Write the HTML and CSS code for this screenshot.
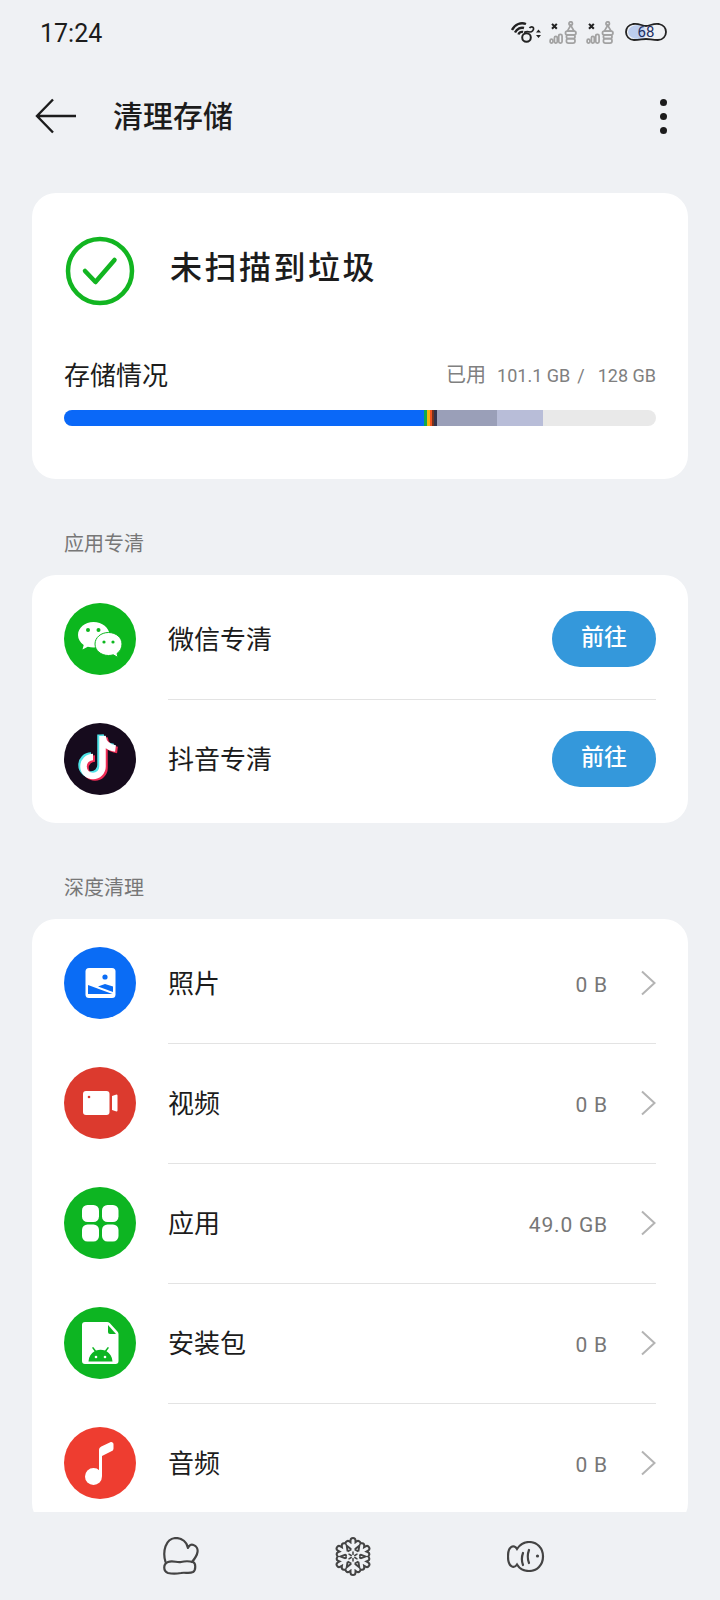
FILE: index.html

```html
<!DOCTYPE html>
<html lang="zh-CN">
<head>
  <meta charset="UTF-8" />
  <meta name="viewport" content="width=device-width, initial-scale=1.0" />
  <title>清理存储</title>
  <link rel="stylesheet" href="styles.css">
</head>
<body>
  <svg class="defs" width="0" height="0">
    <symbol id="sim" viewBox="0 0 31 24">
      <path d="M3 3l5 5M8 3l-5 5" stroke="#222" stroke-width="2.2" fill="none"/>
      <g fill="none" stroke="#a2a2a2" stroke-width="1.8">
        <rect x="1" y="19" width="3" height="4" rx="1.5"/>
        <rect x="5.5" y="16" width="3" height="7" rx="1.5"/>
        <rect x="10" y="14" width="3.5" height="9" rx="1.7"/>
        <circle cx="22.5" cy="2.6" r="1.8"/>
        <path d="M19 10.5l3.5-6 3.5 6z"/>
        <rect x="17" y="10.5" width="11" height="4" rx="2"/>
        <rect x="18" y="14.5" width="9" height="4" rx="2"/>
        <rect x="18" y="18.5" width="9" height="4.5" rx="2.2"/>
      </g>
    </symbol>
    <symbol id="arrow" viewBox="0 0 16 26">
      <path d="M2 1.5L14.5 13 2 24.5" fill="none" stroke="#b4b4b4" stroke-width="2"/>
    </symbol>
  </svg>

  <div class="page">
    <div class="status">
      <span class="time">17:24</span>
      <div class="status-icons">
        <svg class="wifi" width="31" height="21" viewBox="0 0 31 21">
          <g fill="none" stroke="#222" stroke-width="2.4">
            <path d="M1 8C4 2 10 0 15 2"/>
            <path d="M4 10.5C6 6.5 10 5 13 6"/>
            <path d="M7.5 12.5C8 10.5 10 9.5 12 10"/>
            <circle cx="15.5" cy="15.5" r="4.3" stroke-width="2"/>
            <path d="M13 10.5c2-1 4-1 6-.5 2 0 4-2 3.500-4-.5-1.500-3-1.500-4 0" stroke-width="1.7"/>
          </g>
          <path d="M25 10.5l2.500-3 2.500 3zM25 13l2.500 3 2.500-3z" fill="#222"/>
        </svg>
        <svg class="sim" width="30" height="23"><use href="#sim"/></svg>
        <svg class="sim" width="30" height="23"><use href="#sim"/></svg>
        <div class="battery">
          <svg width="42" height="20" viewBox="0 0 42 20">
            <defs>
              <linearGradient id="batt-fill">
                <stop offset="0" stop-color="#bccdee"/>
                <stop offset="0.7" stop-color="#bccdee"/>
                <stop offset="1" stop-color="#bccdee" stop-opacity="0"/>
              </linearGradient>
            </defs>
            <ellipse cx="13" cy="10" rx="10" ry="7" fill="url(#batt-fill)"/>
            <path d="M8 2c6-1 9 2 13 2s7-3 13-2c4 1 7 4 7 8s-3 8-8 8c-6 0-8-1-12-1s-6 1-12 1c-5 0-8-4-8-8s3-7 7-8z" fill="none" stroke="#222" stroke-width="1.8"/>
          </svg>
          <span class="battery-num">68</span>
        </div>
      </div>
    </div>

    <div class="nav">
      <svg class="nav-back" width="42" height="36" viewBox="0 0 42 36">
        <path d="M18 1.5L2 18l16 16.5M2 18h39" fill="none" stroke="#1c1c1c" stroke-width="2.4"/>
      </svg>
      <h1>清理存储</h1>
      <div class="nav-more"><i></i><i></i><i></i></div>
    </div>

    <div class="main">
      <div class="card summary">
        <div class="summary-top">
          <svg width="70" height="70" viewBox="0 0 70 70">
            <circle cx="35" cy="35" r="32" fill="none" stroke="#12b521" stroke-width="4.5"/>
            <path d="M20 35l10.5 11L49.500 24" fill="none" stroke="#12b521" stroke-width="4.5" stroke-linecap="round" stroke-linejoin="round"/>
          </svg>
          <span class="summary-title">未扫描到垃圾</span>
        </div>
        <div class="usage">
          <span class="usage-name">存储情况</span>
          <span class="usage-num"><span class="usage-cn">已用</span>101.1 GB<span class="usage-sep">/</span>128 GB</span>
        </div>
        <div class="bar">
          <span class="seg seg-blue"></span>
          <span class="seg seg-a"></span>
          <span class="seg seg-b"></span>
          <span class="seg seg-c"></span>
          <span class="seg seg-d"></span>
          <span class="seg seg-e"></span>
          <span class="seg seg-gray"></span>
          <span class="seg seg-light"></span>
        </div>
      </div>

      <div class="label">应用专清</div>
      <div class="card list">
        <div class="row">
          <svg class="icon" viewBox="0 0 72 72">
            <circle cx="36" cy="36" r="36" fill="#0cb71e"/>
            <path d="M29.5 19C20.900 19 14 24.700 14 32c0 4 2.200 7.500 5.700 10l-1.200 4.500 5.300-2.700c1.800.5 3.700.8 5.700.8 8.600 0 16-5.400 16-12.600S38.100 19 29.500 19z" fill="#fff"/>
            <path d="M44.5 29.5C36.900 29.500 31 34.600 31 41s5.900 11.500 13.500 11.500c1.700 0 3.300-.3 4.800-.7l4.700 2.700-1-4c3.100-2.200 5-5.600 5-9.500 0-6.400-5.900-11.500-13.500-11.500z" fill="#fff" stroke="#0cb71e" stroke-width="1"/>
            <circle cx="24" cy="27" r="2" fill="#0cb71e"/>
            <circle cx="34.5" cy="27" r="2" fill="#0cb71e"/>
            <circle cx="40" cy="39" r="1.6" fill="#0cb71e"/>
            <circle cx="49" cy="39" r="1.6" fill="#0cb71e"/>
          </svg>
          <div class="row-body">
            <span class="row-name">微信专清</span>
            <span class="go">前往</span>
          </div>
        </div>
        <div class="row">
          <svg class="icon" viewBox="0 0 72 72">
            <circle cx="36" cy="36" r="36" fill="#160b1d"/>
            <g fill="none" stroke-width="6.5">
              <path transform="translate(-2 -1.5)" d="M38.5 13v30.500a9.500 9.500 0 1 1-9.500-9.500M38.500 13c.8 7 5.500 11.500 13 12.500" stroke="#4fe3e6"/>
              <path transform="translate(2 1.5)" d="M38.5 13v30.500a9.500 9.500 0 1 1-9.500-9.500M38.500 13c.8 7 5.500 11.500 13 12.500" stroke="#ef2c55"/>
              <path d="M38.5 13v30.500a9.500 9.500 0 1 1-9.500-9.500M38.500 13c.8 7 5.500 11.500 13 12.500" stroke="#fff"/>
            </g>
          </svg>
          <div class="row-body">
            <span class="row-name">抖音专清</span>
            <span class="go">前往</span>
          </div>
        </div>
      </div>

      <div class="label">深度清理</div>
      <div class="card list">
        <div class="row">
          <svg class="icon" viewBox="0 0 72 72">
            <circle cx="36" cy="36" r="36" fill="#0a6cf5"/>
            <rect x="21.5" y="21" width="30" height="30" rx="3.5" fill="#fff"/>
            <circle cx="41" cy="30" r="2.6" fill="#0a6cf5"/>
            <path d="M24 38l24.500 9H24z" fill="#0a6cf5"/>
            <path d="M34 39.5l7-2.500 8 2.500V45z" fill="#0a6cf5"/>
          </svg>
          <div class="row-body">
            <span class="row-name">照片</span>
            <span class="row-val">0 B</span>
            <svg class="chev" width="16" height="26"><use href="#arrow"/></svg>
          </div>
        </div>
        <div class="row">
          <svg class="icon" viewBox="0 0 72 72">
            <circle cx="36" cy="36" r="36" fill="#dc3a2e"/>
            <rect x="19" y="24" width="26.5" height="24" rx="3" fill="#fff"/>
            <path d="M48 29l4.500-1.500a1 1 0 0 1 1 1v15a1 1 0 0 1-1 1L48 43z" fill="#fff"/>
            <circle cx="25" cy="30" r="1.3" fill="#dc3a2e"/>
          </svg>
          <div class="row-body">
            <span class="row-name">视频</span>
            <span class="row-val">0 B</span>
            <svg class="chev" width="16" height="26"><use href="#arrow"/></svg>
          </div>
        </div>
        <div class="row">
          <svg class="icon" viewBox="0 0 72 72">
            <circle cx="36" cy="36" r="36" fill="#0db522"/>
            <rect x="18" y="18" width="17" height="17" rx="5.5" fill="#fff"/>
            <rect x="38" y="18" width="16.5" height="17" rx="5.5" fill="#fff"/>
            <rect x="18" y="37.5" width="17" height="17" rx="5.5" fill="#fff"/>
            <rect x="38" y="37.5" width="16.5" height="17" rx="5.5" fill="#fff"/>
          </svg>
          <div class="row-body">
            <span class="row-name">应用</span>
            <span class="row-val">49.0 GB</span>
            <svg class="chev" width="16" height="26"><use href="#arrow"/></svg>
          </div>
        </div>
        <div class="row">
          <svg class="icon" viewBox="0 0 72 72">
            <circle cx="36" cy="36" r="36" fill="#0db522"/>
            <path d="M21 15h22c1 0 2 .4 2.700 1.100l7.700 8.300c.7.700 1.100 1.700 1.100 2.700V54a3 3 0 0 1-3 3H21a3 3 0 0 1-3-3V18a3 3 0 0 1 3-3z" fill="#fff"/>
            <path d="M44 18l8 9h-6a2 2 0 0 1-2-2z" fill="#0db522"/>
            <path d="M24.5 54.5c.3-5 2.700-8.400 6-10.300L28 40.700l1.200-.8 2.800 3.600c3-1.100 6-1.100 9 0l2.800-3.600 1.200.8-2.500 3.500c3.300 1.900 5.700 5.300 6 10.300z" fill="#0db522"/>
            <circle cx="32" cy="50" r="1.3" fill="#fff"/>
            <circle cx="41" cy="50" r="1.3" fill="#fff"/>
          </svg>
          <div class="row-body">
            <span class="row-name">安装包</span>
            <span class="row-val">0 B</span>
            <svg class="chev" width="16" height="26"><use href="#arrow"/></svg>
          </div>
        </div>
        <div class="row">
          <svg class="icon" viewBox="0 0 72 72">
            <circle cx="36" cy="36" r="36" fill="#ee3d30"/>
            <circle cx="29.5" cy="49.5" r="8.5" fill="#fff"/>
            <path d="M35 49V23c0-1.500.8-2.800 2.300-3.500l9-4.300c1.500-.7 3.200.4 3.200 2v4.300c0 1.100-.6 2.100-1.600 2.600L38 29v20z" fill="#fff"/>
          </svg>
          <div class="row-body">
            <span class="row-name">音频</span>
            <span class="row-val">0 B</span>
            <svg class="chev" width="16" height="26"><use href="#arrow"/></svg>
          </div>
        </div>
      </div>
    </div>

    <div class="tabs">
      <svg width="36" height="38" viewBox="0 0 36 38">
        <g fill="none" stroke="#444" stroke-width="2.2" stroke-linejoin="round" stroke-linecap="round">
          <path d="M2.5 25C-.5 15 2 1.500 13 1c6 0 11 4 12 10 1-3 3.500-4 5.500-3 3 1 4.500 4 4 7-.5 4-3 7-5.500 10"/>
          <path d="M5 25c5-2 9 1 13 0s8-1 12 0c3 1 3 8 0 10-4 2-8 0-12 1-5 1-9 1-13 0-5-2-5-9 0-11z"/>
        </g>
      </svg>
      <svg width="36" height="39" viewBox="-18 -19.5 36 39">
        <defs>
          <g id="flake-arm">
            <path d="M0 -4V-16M0 -9L-5 -13M0 -9L5 -13"/>
          </g>
          <g id="flake">
            <use href="#flake-arm"/>
            <use href="#flake-arm" transform="rotate(60)"/>
            <use href="#flake-arm" transform="rotate(120)"/>
            <use href="#flake-arm" transform="rotate(180)"/>
            <use href="#flake-arm" transform="rotate(240)"/>
            <use href="#flake-arm" transform="rotate(300)"/>
          </g>
        </defs>
        <use href="#flake" fill="none" stroke="#444" stroke-width="7" stroke-linecap="round" stroke-linejoin="round"/>
        <circle r="7.5" fill="#444"/>
        <use href="#flake" fill="none" stroke="#eff1f4" stroke-width="3" stroke-linecap="round" stroke-linejoin="round"/>
        <circle r="6.2" fill="#eff1f4"/>
        <g stroke="#444" stroke-width="1.5" stroke-linecap="round">
          <path d="M0-2v-2.500M0 2v2.500M-1.800-1l-2.200-1.300M1.800-1l2.200-1.300M-1.800 1l-2.200 1.300M1.800 1l2.200 1.300"/>
        </g>
      </svg>
      <svg width="38" height="31" viewBox="0 0 38 31">
        <g fill="none" stroke="#444" stroke-width="2.2" stroke-linecap="round">
          <path d="M10 8C7 3 1 5 1 15.500 1 26 7 28 10 23.500c3 5 8 6.500 12 6.500 8 0 14-6 14-14.500S30 1 22 1C17 1 13 3.500 10 8z"/>
          <path d="M16 12c-1.500 4-1.500 8 0 12M22 9c-1.500 4-1.500 9 0 13"/>
        </g>
        <circle cx="30.5" cy="15" r="1.6" fill="#444"/>
      </svg>
    </div>
  </div>
</body>
</html>
```

FILE: styles.css

```css
body {
  margin: 0;
  background-color: #eff1f4;
  color: #1c1c1c;
  font-family: Roboto, "Noto Sans CJK SC", sans-serif;
}
.defs {
  position: absolute;
}
.page {
  height: 1600px;
  display: flex;
  flex-direction: column;
  overflow: hidden;
}

.status {
  height: 66px;
  flex: none;
  display: flex;
  align-items: center;
  justify-content: space-between;
  padding: 0 53px 0 40px;
}
.time {
  font-size: 25px;
}
.status-icons {
  display: flex;
  align-items: center;
  gap: 8px;
  margin-bottom: 2px;
}
.sim {
  margin-left: -1px;
}
.battery {
  position: relative;
  width: 42px;
  height: 20px;
  margin-left: 1px;
}
.battery svg {
  display: block;
}
.battery-num {
  position: absolute;
  left: 0;
  right: 0;
  top: 3px;
  text-align: center;
  font-size: 15px;
  line-height: 15px;
  color: #1d2f63;
}

.nav {
  height: 100px;
  flex: none;
  display: flex;
  align-items: center;
  padding: 0 53px 0 35px;
}
.nav-back {
  flex: none;
}
.nav h1 {
  margin: 0 0 5px 36px;
  flex: 1;
  font-size: 30px;
  font-weight: 500;
}
.nav-more {
  display: flex;
  flex-direction: column;
  gap: 7px;
}
.nav-more i {
  display: block;
  width: 7px;
  height: 7px;
  border-radius: 50%;
  background: #1c1c1c;
}

.main {
  flex: 1;
  overflow: hidden;
  padding: 27px 32px 0;
}
.card {
  background: #fff;
  border-radius: 24px;
}
.summary {
  box-sizing: border-box;
  height: 286px;
  padding: 42px 32px 0;
}
.summary-top {
  display: flex;
  align-items: center;
  gap: 35px;
  padding-left: 1px;
}
.summary-top svg {
  margin-top: 1px;
}
.summary-title {
  font-size: 32px;
  letter-spacing: 2.5px;
  font-weight: 500;
  margin-bottom: 12px;
}
.usage {
  display: flex;
  align-items: center;
  justify-content: space-between;
  margin-top: 47px;
  height: 40px;
}
.usage-name {
  font-size: 26px;
}
.usage-num {
  font-size: 18px;
  color: #808080;
}
.usage-cn {
  font-size: 20px;
  margin-right: 11px;
}
.usage-sep {
  margin: 0 13px 0 7px;
}
.bar {
  margin-top: 17px;
  height: 16px;
  border-radius: 8px;
  background: #e9e9e9;
  display: flex;
  overflow: hidden;
}
.seg {
  display: block;
  height: 100%;
}
.seg-blue { width: 360px; background: #0a68f8; }
.seg-a { width: 3px; background: #10a94e; }
.seg-b { width: 3px; background: #f5b50f; }
.seg-c { width: 2px; background: #f0521f; }
.seg-d { width: 2px; background: #74331f; }
.seg-e { width: 3px; background: #32324a; }
.seg-gray { width: 60px; background: #9a9fb8; }
.seg-light { width: 46px; background: #b8bdd8; }

.label {
  margin: 48px 0 16px 32px;
  height: 32px;
  line-height: 34px;
  font-size: 20px;
  color: #777;
}
.list {
  padding: 4px 0;
}
.row {
  display: flex;
  height: 120px;
  padding-left: 32px;
}
.icon {
  width: 72px;
  height: 72px;
  flex: none;
  align-self: center;
}
.row-body {
  flex: 1;
  display: flex;
  align-items: center;
  margin: 0 32px 0 32px;
}
.row + .row .row-body {
  background: linear-gradient(#e3e3e3, #e3e3e3) top / 100% 1px no-repeat;
}
.row-name {
  flex: 1;
  font-size: 26px;
  padding-bottom: 3px;
}
.row-val {
  font-size: 21px;
  color: #777;
  letter-spacing: 0.8px;
  margin: 3px 32px 0 0;
}
.chev {
  flex: none;
}
.go {
  width: 104px;
  height: 56px;
  line-height: 54px;
  border-radius: 28px;
  background: #3498db;
  color: #fff;
  text-align: center;
  font-size: 23px;
  font-weight: 500;
}

.tabs {
  height: 88px;
  flex: none;
  display: flex;
  align-items: center;
  justify-content: center;
  gap: 136px;
  padding-right: 12px;
  background: #eff1f4;
}
```
